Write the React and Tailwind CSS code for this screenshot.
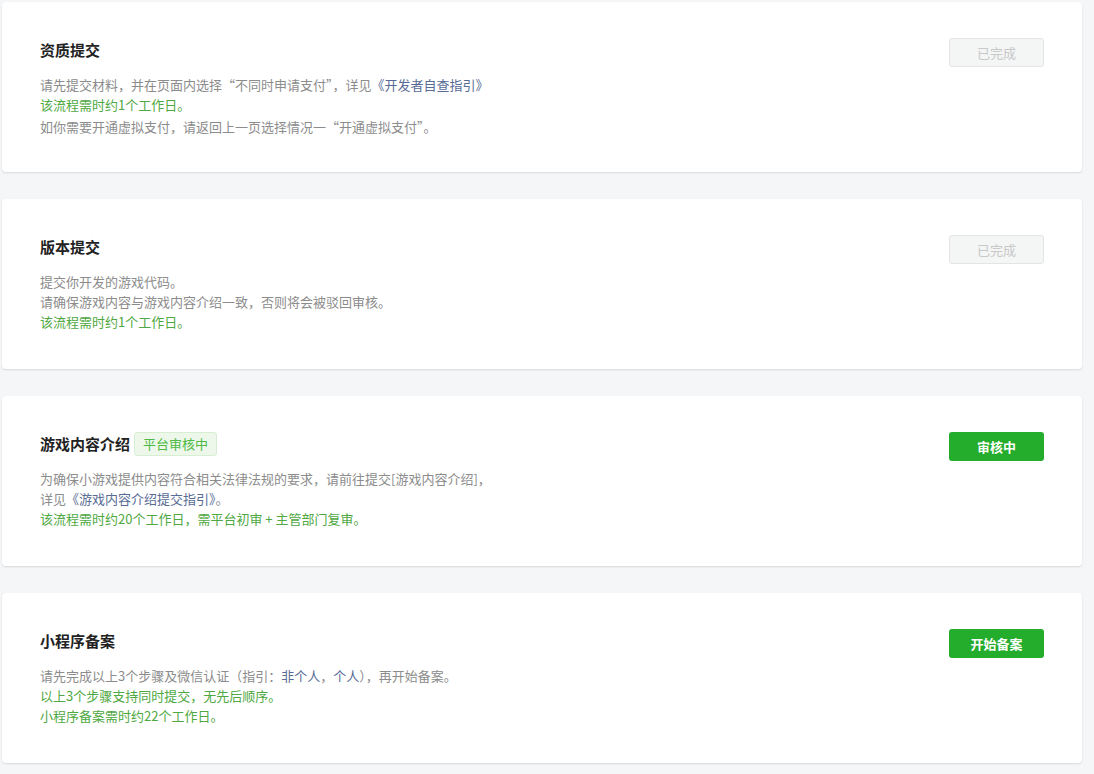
import React from "react";

const font = { fontFamily: '"Noto Sans CJK SC", "Noto Sans", sans-serif' };

function Card({ title, badge, button, done, children }) {
  return (
    <div className="h-[170px] bg-white rounded-[4px] shadow-[0_1px_2px_rgba(0,0,0,0.12)] flex items-start justify-between pl-[38px] pr-[38px] pt-[36px]">
      <div className="flex flex-col">
        <div className="flex items-center h-6">
          <span className="text-[15px] font-bold text-[#222]">{title}</span>
          {badge && (
            <span className="ml-[4px] h-6 px-[8px] flex items-center rounded-[3px] border border-[#d6efd2] bg-[#edf8eb] text-[13px] text-[#4fb846]">
              {badge}
            </span>
          )}
        </div>
        <div className="mt-[13px] text-[13px] leading-[20px] text-[#8c8c8c]">{children}</div>
      </div>
      <button
        className={
          done
            ? "w-[95px] h-[29px] rounded-[3px] border border-[#e2e4e5] bg-[#f4f5f5] text-[13px] text-[#c8c8c8] flex items-center justify-center"
            : "w-[95px] h-[29px] rounded-[3px] bg-[#24ad2c] text-[13px] font-bold text-white flex items-center justify-center"
        }
      >
        {button}
      </button>
    </div>
  );
}

const G = ({ children }) => <div className="text-[#4fa842]">{children}</div>;
const L = ({ children }) => <span className="text-[#576b95]">{children}</span>;

export default function App() {
  return (
    <div style={font} className="min-h-[774px] bg-[#f5f6f7] pl-[2px] pr-[12px] pt-[2px] pb-[11px] flex flex-col gap-[27px]">
      <Card title="资质提交" button="已完成" done>
        <div>
          请先提交材料，并在页面内选择“不同时申请支付”，详见<L>《开发者自查指引》</L>
        </div>
        <G>该流程需时约1个工作日。</G>
        <div className="mt-[2px]">如你需要开通虚拟支付，请返回上一页选择情况一“开通虚拟支付”。</div>
      </Card>
      <Card title="版本提交" button="已完成" done>
        <div>提交你开发的游戏代码。</div>
        <div>请确保游戏内容与游戏内容介绍一致，否则将会被驳回审核。</div>
        <G>该流程需时约1个工作日。</G>
      </Card>
      <Card title="游戏内容介绍" badge="平台审核中" button="审核中">
        <div>为确保小游戏提供内容符合相关法律法规的要求，请前往提交[游戏内容介绍]，</div>
        <div>
          详见<L>《游戏内容介绍提交指引》</L>。
        </div>
        <G>该流程需时约20个工作日，需平台初审 + 主管部门复审。</G>
      </Card>
      <Card title="小程序备案" button="开始备案">
        <div>
          请先完成以上3个步骤及微信认证（指引：<L>非个人</L>，<L>个人</L>），再开始备案。
        </div>
        <G>以上3个步骤支持同时提交，无先后顺序。</G>
        <G>小程序备案需时约22个工作日。</G>
      </Card>
    </div>
  );
}
